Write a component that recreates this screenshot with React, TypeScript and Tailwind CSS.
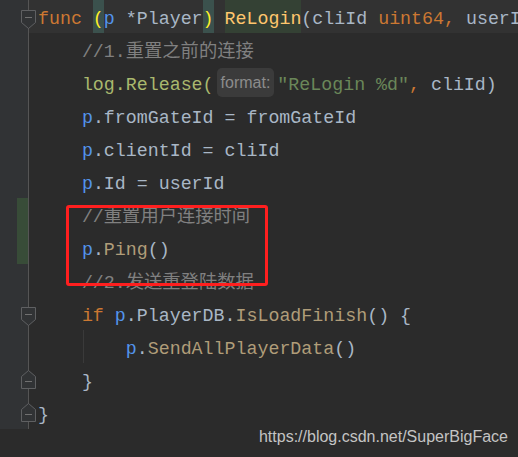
import React from 'react';

type Tok = { t: string; c?: string; bg?: string };

const KW = 'text-[#cc7832]';
const ID = 'text-[#a9b7c6]';
const RECV = 'text-[#5394ec]';
const CMT = 'text-[#808080]';
const STR = 'text-[#6a8759]';
const CALL = 'text-[#b09d79]';
const PKG = 'text-[#a9b86e]';

function FoldMarker({ dir }: { dir: 'down' | 'up' }) {
  return (
    <svg width="15" height="19" viewBox="0 0 15 19" className="block">
      {dir === 'down' ? (
        <path d="M0.5 0.5 H14.5 V12.5 L7.5 18.5 L0.5 12.5 Z" fill="#313335" stroke="#5f6062" />
      ) : (
        <path d="M0.5 6.5 L7.5 0.5 L14.5 6.5 V18.5 H0.5 Z" fill="#313335" stroke="#5f6062" />
      )}
      <path d={dir === 'down' ? 'M4 7.5 H11' : 'M4 11.5 H11'} stroke="#707070" />
    </svg>
  );
}

const lines: { toks: Tok[]; fold?: 'down' | 'up'; foldTop?: number; change?: boolean; current?: boolean; guide?: boolean }[] = [
  {
    current: true,
    fold: 'down',
    foldTop: 10,
    toks: [
      { t: 'func ', c: KW },
      { t: '(', c: 'text-[#ffef28]', bg: 'bg-[#3b514d]' },
      { t: 'p', c: RECV },
      { t: ' *Player', c: ID },
      { t: ')', c: 'text-[#ffef28]', bg: 'bg-[#3b514d]' },
      { t: ' ' },
      { t: 'ReLogin', c: 'text-[#ffc66d]', bg: 'bg-[#344134]' },
      { t: '(cliId ', c: ID },
      { t: 'uint64', c: KW },
      { t: ', ', c: KW },
      { t: 'userId ', c: ID },
      { t: 'uint64', c: KW },
    ],
  },
  { toks: [{ t: '    ' }, { t: '//1.重置之前的连接', c: CMT }] },
  { toks: [] },
  {
    toks: [
      { t: '    ' },
      { t: 'p', c: RECV },
      { t: '.fromGateId = fromGateId', c: ID },
    ],
  },
  {
    toks: [
      { t: '    ' },
      { t: 'p', c: RECV },
      { t: '.clientId = cliId', c: ID },
    ],
  },
  {
    toks: [
      { t: '    ' },
      { t: 'p', c: RECV },
      { t: '.Id = userId', c: ID },
    ],
  },
  { change: true, toks: [{ t: '    ' }, { t: '//重置用户连接时间', c: CMT }] },
  {
    change: true,
    toks: [
      { t: '    ' },
      { t: 'p', c: RECV },
      { t: '.', c: ID },
      { t: 'Ping', c: CALL },
      { t: '()', c: ID },
    ],
  },
  { toks: [{ t: '    ' }, { t: '//2.发送重登陆数据', c: CMT }] },
  {
    fold: 'down',
    foldTop: 10,
    toks: [
      { t: '    ' },
      { t: 'if ', c: KW },
      { t: 'p', c: RECV },
      { t: '.PlayerDB.', c: ID },
      { t: 'IsLoadFinish', c: CALL },
      { t: '() {', c: ID },
    ],
  },
  {
    guide: true,
    toks: [
      { t: '        ' },
      { t: 'p', c: RECV },
      { t: '.', c: ID },
      { t: 'SendAllPlayerData', c: CALL },
      { t: '()', c: ID },
    ],
  },
  { fold: 'up', foldTop: 7, toks: [{ t: '    ' }, { t: '}', c: ID }] },
  { fold: 'up', foldTop: 7, toks: [{ t: '}', c: ID }] },
];

export default function App() {
  const mono = { fontFamily: '"Liberation Mono", "Noto Sans CJK SC", monospace' };

  return (
    <div className="relative w-[518px] h-[457px] overflow-hidden bg-[#2b2b2b] flex flex-col">
      {lines.map((ln, i) => (
        <div key={i} className="flex h-[33px] shrink-0">
          {/* gutter */}
          <div className="relative w-[28px] shrink-0 bg-[#313335]">
            {ln.change && <div className="absolute left-[17px] top-0 w-[11px] h-full bg-[#384c38]" />}
            {ln.fold && (
              <div className="absolute left-[21px] z-10" style={{ top: ln.foldTop }}>
                <FoldMarker dir={ln.fold} />
              </div>
            )}
          </div>
          <div className="w-px shrink-0 bg-[#555555]" />
          {/* code */}
          <div
            className={`relative flex-1 pl-[9px] whitespace-pre text-[18.3px] leading-[38px] overflow-hidden ${ln.current ? 'bg-[#323232]' : ''}`}
            style={mono}
          >
            {ln.guide && <div className="absolute left-[54px] top-0 h-full w-px bg-[#3a3a3a]" />}
            {i === 2 ? (
              <>
                <span>    </span>
                <span className={PKG}>log.Release(</span>
                <span
                  className="inline-block align-top mt-[2px] mx-[3px] px-[4px] rounded-[5px] bg-[#3b3b3b] text-[#8c8c8c] text-[16px] leading-[29px]"
                  style={{ fontFamily: '"Liberation Sans", Arial, sans-serif' }}
                >
                  format:
                </span>
                <span className={STR}>"ReLogin %d"</span>
                <span className={KW}>, </span>
                <span className={ID}>cliId)</span>
              </>
            ) : (
              ln.toks.map((tk, j) => (
                <span key={j} className={`${tk.c ?? ID} ${tk.bg ?? ''} inline-block align-top h-[33px]`}>
                  {tk.t}
                </span>
              ))
            )}
          </div>
        </div>
      ))}

      {/* red annotation box */}
      <div className="absolute left-[66px] top-[205px] w-[202px] h-[81px] border-[3px] border-[#ff1f1f] rounded-[3px]" />

      {/* watermark */}
      <div
        className="absolute right-[10px] top-[426px] text-[16px] text-[#c4c4c4] leading-[22px]"
        style={{ fontFamily: '"Liberation Sans", Arial, sans-serif' }}
      >
        https://blog.csdn.net/SuperBigFace
      </div>
    </div>
  );
}
